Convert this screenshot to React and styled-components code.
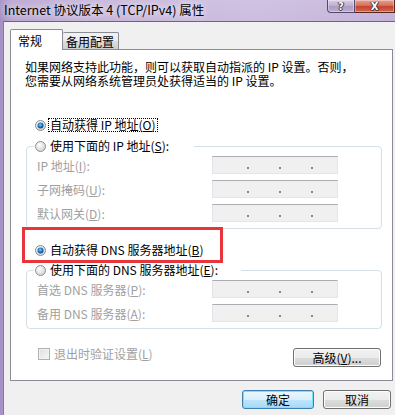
import React from "react";
import styled, { createGlobalStyle } from "styled-components";

const GlobalStyle = createGlobalStyle`
  html, body {
    margin: 0;
    padding: 0;
    background: #f0f0f0;
  }
  body {
    font-family: "Noto Sans CJK SC", "Liberation Sans", sans-serif;
    font-size: 12px;
    color: #000;
  }
`;

const Window = styled.div`
  width: 395px;
  height: 415px;
  overflow: hidden;
  display: flex;
  flex-direction: column;
  background: linear-gradient(to right, #a58fc6 0%, #b9a6d2 3%, #c7b6db 30%, #cdbee0 65%, #c4b3d9 100%);
`;

const TitleBar = styled.div`
  height: 21px;
  flex: none;
  display: flex;
  justify-content: space-between;
  align-items: flex-start;
  background: linear-gradient(to bottom, rgba(255, 255, 255, 0.08), rgba(255, 255, 255, 0));
`;

const Title = styled.div`
  padding-left: 4px;
  line-height: 20px;
  font-size: 12.5px;
  white-space: nowrap;
  color: #000;
  text-shadow: 0 0 6px rgba(255, 255, 255, 0.9), 0 0 12px rgba(255, 255, 255, 0.6);
`;

const CaptionButtons = styled.div`
  display: flex;
  height: 13px;
`;

const CaptionButton = styled.div`
  width: ${(p) => p.$width}px;
  height: 13px;
  box-sizing: border-box;
  display: flex;
  justify-content: center;
  align-items: center;
  overflow: hidden;
  border: 1px solid ${(p) => (p.$close ? "#5a2620" : "#54496a")};
  border-top: none;
  border-radius: ${(p) => (p.$close ? "0" : "0 0 0 4px")};
  border-left: ${(p) => (p.$close ? "none" : undefined)};
  background: ${(p) =>
    p.$close
      ? "linear-gradient(to bottom, #e7a193 0%, #d7705c 45%, #c4432e 55%, #d4684e 100%)"
      : "linear-gradient(to bottom, #d8cee6 0%, #bfb1d2 45%, #ad9cc4 55%, #bcaed0 100%)"};
  box-shadow: inset 0 0 0 1px rgba(255, 255, 255, 0.35);
  font-family: "DejaVu Sans", sans-serif;
  font-weight: bold;
  font-size: 10px;
  line-height: 11px;
  color: #fff;
  text-shadow: -1px 0 #3a3145, 1px 0 #3a3145, 0 1px #3a3145;
`;

const Client = styled.div`
  flex: 1;
  margin-left: 3px;
  background: #f0f0f0;
  border-top: 1px solid #6e6480;
  border-left: 1px solid #837a95;
  padding: 7px 0 0 6px;
  display: flex;
  flex-direction: column;
`;

const TabRow = styled.div`
  display: flex;
  align-items: flex-end;
  height: 20px;
  position: relative;
  z-index: 1;
`;

const Tab = styled.div`
  box-sizing: border-box;
  width: ${(p) => (p.$active ? 53 : 56)}px;
  height: ${(p) => (p.$active ? 21 : 17)}px;
  margin-bottom: ${(p) => (p.$active ? -1 : 0)}px;
  padding-left: ${(p) => (p.$active ? 7 : 3)}px;
  display: flex;
  align-items: center;
  border: 1px solid #898c95;
  border-bottom: none;
  border-left: ${(p) => (p.$active ? "1px solid #898c95" : "none")};
  border-radius: 2px 2px 0 0;
  background: ${(p) =>
    p.$active
      ? "#fff"
      : "linear-gradient(to bottom, #f2f2f2 0%, #ebebeb 50%, #dddddd 51%, #cfcfcf 100%)"};
  font-size: 12px;
  white-space: nowrap;
`;

const Panel = styled.div`
  position: relative;
  box-sizing: border-box;
  width: 383px;
  height: 332px;
  background: #fff;
  border: 1px solid #898c95;
  display: flex;
  flex-direction: column;
`;

const Description = styled.div`
  margin: 10px 0 0 14px;
  line-height: 14px;
  white-space: nowrap;
`;

const RadioRow = styled.div`
  height: 16px;
  display: flex;
  align-items: center;
  gap: 4px;
  margin: ${(p) => p.$margin || "0"};
  white-space: nowrap;
`;

const RadioText = styled.span`
  padding: 0 1px;
  margin-left: -1px;
  line-height: 12px;
  outline: ${(p) => (p.$focus ? "1px dotted #000" : "none")};
  outline-offset: 0;
`;

const GroupBox = styled.fieldset`
  box-sizing: border-box;
  width: 356px;
  min-width: 0;
  margin: ${(p) => p.$margin};
  padding: 2px 10px 6px 10px;
  border: 1px solid #d5dfe5;
  border-radius: 4px;
`;

const Legend = styled.legend`
  margin-left: -3px;
  padding: 0 ${(p) => p.$pad}px 0 1px;
`;

const FieldGrid = styled.div`
  display: grid;
  grid-template-columns: 175px 126px;
  row-gap: 6px;
  align-items: center;
`;

const FieldLabel = styled.span`
  color: #a0a0a0;
  white-space: nowrap;
`;

const IpInput = styled.div`
  box-sizing: border-box;
  height: 18px;
  display: flex;
  align-items: flex-end;
  gap: 30px;
  padding: 0 0 4px 34px;
  background: #f0f0f0;
  border: 1px solid #e1e6ec;
  border-top-color: #abadb3;
  border-left-color: #e2e3ea;
`;

const Dot = styled.span`
  width: 2px;
  height: 2px;
  background: #8a8a8a;
`;

const Highlight = styled.div`
  position: absolute;
  left: 11px;
  top: 177px;
  width: 201px;
  height: 36px;
  box-sizing: border-box;
  border: 3px solid #e8353c;
  pointer-events: none;
`;

const Footer = styled.div`
  display: flex;
  justify-content: space-between;
  align-items: flex-start;
  margin-top: 18px;
  padding: 0 11px 0 27px;
`;

const CheckRow = styled.div`
  display: flex;
  align-items: center;
  gap: 4px;
  height: 13px;
  color: #a0a0a0;
  white-space: nowrap;
`;

const CheckBox = styled.span`
  box-sizing: border-box;
  width: 12px;
  height: 12px;
  border: 1px solid #b1b1b1;
  background: linear-gradient(135deg, #dedede, #f7f7f7);
  box-shadow: inset 0 0 0 1px #f2f2f2;
`;

const Button = styled.div`
  box-sizing: border-box;
  width: ${(p) => p.$width}px;
  height: 19px;
  margin-top: ${(p) => p.$top || 0}px;
  display: flex;
  justify-content: center;
  align-items: center;
  border: 1px solid ${(p) => (p.$default ? "#3c7fb1" : "#707070")};
  border-radius: 3px;
  background: ${(p) =>
    p.$default
      ? "linear-gradient(to bottom, #eaf6fd 0%, #d9f0fc 50%, #bee6fd 51%, #a7d9f5 100%)"
      : "linear-gradient(to bottom, #f2f2f2 0%, #ebebeb 50%, #dddddd 51%, #cfcfcf 100%)"};
  box-shadow: inset 0 0 0 1px ${(p) => (p.$default ? "#7ae0fb" : "#fcfcfc")};
  white-space: nowrap;
  font-size: 12px;
`;

const ButtonRow = styled.div`
  display: flex;
  justify-content: flex-end;
  gap: 9px;
  margin-top: 9px;
  padding-right: 4px;
`;

const Radio = ({ checked, id }) => (
  <svg width="11" height="11" viewBox="0 0 11 11">
    <defs>
      <radialGradient id={`rb${id}`} cx="40%" cy="35%" r="70%">
        <stop offset="0" stopColor="#ffffff" />
        <stop offset="1" stopColor="#cfcfcf" />
      </radialGradient>
      <radialGradient id={`rd${id}`} cx="45%" cy="40%" r="60%">
        <stop offset="0" stopColor="#7fd3ff" />
        <stop offset="0.5" stopColor="#1f86d6" />
        <stop offset="1" stopColor="#0c3f7a" />
      </radialGradient>
    </defs>
    <circle cx="5.5" cy="5.5" r="5" fill={`url(#rb${id})`} stroke="#8e8f8f" />
    {checked && <circle cx="5.5" cy="5.5" r="3" fill={`url(#rd${id})`} />}
  </svg>
);

const IpField = () => (
  <IpInput>
    <Dot />
    <Dot />
    <Dot />
  </IpInput>
);

export default function App() {
  return (
    <>
      <GlobalStyle />
      <Window>
        <TitleBar>
          <Title>Internet 协议版本 4 (TCP/IPv4) 属性</Title>
          <CaptionButtons>
            <CaptionButton $width={28}>?</CaptionButton>
            <CaptionButton $width={40} $close>
              X
            </CaptionButton>
          </CaptionButtons>
        </TitleBar>
        <Client>
          <TabRow>
            <Tab $active>常规</Tab>
            <Tab>备用配置</Tab>
          </TabRow>
          <Panel>
            <Description>
              如果网络支持此功能，则可以获取自动指派的 IP 设置。否则，
              <br />
              您需要从网络系统管理员处获得适当的 IP 设置。
            </Description>

            <RadioRow $margin="29px 0 0 24px">
              <Radio checked id="a" />
              <RadioText $focus>
                自动获得 IP 地址(<u>O</u>)
              </RadioText>
            </RadioRow>

            <GroupBox $margin="5px 0 0 15px">
              <Legend $pad={24}>
                <RadioRow>
                  <Radio id="b" />
                  <RadioText>
                    使用下面的 IP 地址(<u>S</u>):
                  </RadioText>
                </RadioRow>
              </Legend>
              <FieldGrid>
                <FieldLabel>
                  IP 地址(<u>I</u>):
                </FieldLabel>
                <IpField />
                <FieldLabel>
                  子网掩码(<u>U</u>):
                </FieldLabel>
                <IpField />
                <FieldLabel>
                  默认网关(<u>D</u>):
                </FieldLabel>
                <IpField />
              </FieldGrid>
            </GroupBox>

            <RadioRow $margin="13px 0 0 24px">
              <Radio checked id="c" />
              <RadioText>
                自动获得 DNS 服务器地址(<u>B</u>)
              </RadioText>
            </RadioRow>

            <GroupBox $margin="4px 0 0 15px">
              <Legend $pad={22}>
                <RadioRow>
                  <Radio id="d" />
                  <RadioText>
                    使用下面的 DNS 服务器地址(<u>E</u>):
                  </RadioText>
                </RadioRow>
              </Legend>
              <FieldGrid>
                <FieldLabel>
                  首选 DNS 服务器(<u>P</u>):
                </FieldLabel>
                <IpField />
                <FieldLabel>
                  备用 DNS 服务器(<u>A</u>):
                </FieldLabel>
                <IpField />
              </FieldGrid>
            </GroupBox>

            <Footer>
              <CheckRow>
                <CheckBox />
                <span>
                  退出时验证设置(<u>L</u>)
                </span>
              </CheckRow>
              <Button $width={88} $top={1}>
                高级(<u>V</u>)...
              </Button>
            </Footer>

            <Highlight />
          </Panel>
          <ButtonRow>
            <Button $width={72} $default>
              确定
            </Button>
            <Button $width={68}>取消</Button>
          </ButtonRow>
        </Client>
      </Window>
    </>
  );
}
